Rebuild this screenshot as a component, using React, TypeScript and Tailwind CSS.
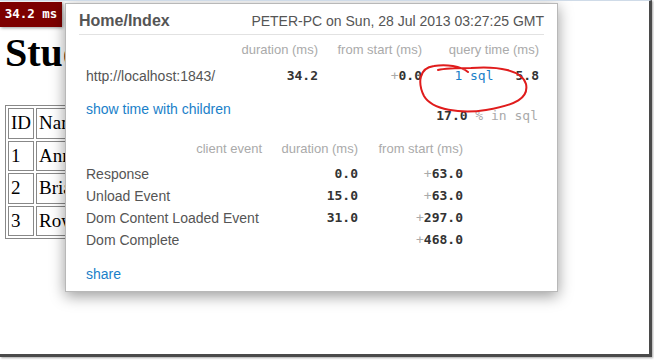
import React from 'react'

const sans = { fontFamily: '"Liberation Sans", Arial, sans-serif' }
const mono = { fontFamily: '"DejaVu Sans Mono", "Liberation Mono", monospace' }
const serif = { fontFamily: '"Liberation Serif", "Times New Roman", serif' }

const students = [
  { id: 1, name: 'Anna' },
  { id: 2, name: 'Brian' },
  { id: 3, name: 'Rowan' },
]

const clientEvents = [
  { name: 'Response', duration: '0.0', start: '63.0' },
  { name: 'Unload Event', duration: '15.0', start: '63.0' },
  { name: 'Dom Content Loaded Event', duration: '31.0', start: '297.0' },
  { name: 'Dom Complete', duration: '', start: '468.0' },
]

function Popup() {
  return (
    <div
      className="absolute left-[65px] top-[2px] w-[493px] h-[289px] bg-white border border-[#b8b8b8] shadow-[0_4px_14px_rgba(0,0,0,0.4)] px-[13px] text-[#555]"
      style={sans}
    >
      {/* title */}
      <div className="h-[31px] pt-[4px] flex items-center justify-between border-b border-[#e2e2e2]">
        <span className="text-[16px] font-bold text-[#555]">Home/Index</span>
        <span className="text-[14px] text-[#555]">PETER-PC on Sun, 28 Jul 2013 03:27:25 GMT</span>
      </div>

      {/* server timings */}
      <div className="grid grid-cols-[159px_80px_104px_117px] h-[30px] items-center text-[13px] text-[#aaa] text-right">
        <span />
        <span>duration (ms)</span>
        <span>from start (ms)</span>
        <span>query time (ms)</span>
      </div>
      <div className="grid grid-cols-[159px_80px_104px_117px] h-[22px] items-center text-right">
        <span className="text-left pl-[7px] text-[14px]">http://localhost:1843/</span>
        <span className="text-[13px] font-bold text-[#333]" style={mono}>34.2</span>
        <span className="text-[13px] font-bold text-[#333]" style={mono}>
          <span className="font-normal text-[#aaa]">+</span>0.0
        </span>
        <span className="flex justify-end items-center gap-[22px] text-[13px]" style={mono}>
          <span className="text-[#1a7fc9]">1 sql</span>
          <span className="font-bold text-[#333]">5.8</span>
        </span>
      </div>
      <div className="h-[40px] flex items-start justify-between pr-[6px] leading-[16px]">
        <span className="mt-[14px] pl-[7px] text-[14px] text-[#1a7fc9]">show time with children</span>
        <span className="mt-[21px] text-[13px]" style={mono}>
          <span className="font-bold text-[#333]">17.0</span>
          <span className="text-[#aaa]"> % in sql</span>
        </span>
      </div>

      {/* client timings */}
      <div className="mt-[11px] grid grid-cols-[183px_96px_105px] h-[22px] items-center text-[13px] text-[#aaa] text-right">
        <span>client event</span>
        <span>duration (ms)</span>
        <span>from start (ms)</span>
      </div>
      <div className="mt-[3px]">
        {clientEvents.map((e) => (
          <div key={e.name} className="grid grid-cols-[183px_96px_105px] h-[22px] items-center text-right">
            <span className="text-left pl-[7px] text-[14px]">{e.name}</span>
            <span className="text-[13px] font-bold text-[#333]" style={mono}>{e.duration}</span>
            <span className="text-[13px] font-bold text-[#333]" style={mono}>
              <span className="font-normal text-[#aaa]">+</span>{e.start}
            </span>
          </div>
        ))}
      </div>

      <div className="mt-[12px] h-[22px] flex items-center pl-[7px] text-[14px] text-[#1a7fc9]">share</div>

      {/* hand drawn annotation */}
      <svg className="absolute left-0 top-0 pointer-events-none" width="493" height="289" viewBox="0 0 493 289" fill="none">
        <path
          d="M402 68 C 395 62, 380 60, 368 62 C 352 64, 352 80, 358 92 C 366 106, 395 110, 420 106 C 450 101, 463 94, 460 80 C 456 66, 432 62, 405 64 C 395 64, 380 64, 372 66"
          stroke="#e01c1c"
          strokeWidth="2"
          strokeLinecap="round"
        />
      </svg>
    </div>
  )
}

export default function App() {
  return (
    <div className="w-[654px] h-[361px] bg-white">
      <div className="relative w-[652px] h-[357px] overflow-hidden bg-white border-t border-[#cfdbe8] border-r-[3px] border-b-[3px] border-r-[#4a4a4a] border-b-[#4a4a4a] shadow-[1px_1px_2px_rgba(0,0,0,0.35)]">
        {/* page behind the profiler popup */}
        <div className="w-[65px] overflow-hidden">
          <div className="mt-[1px] w-[62px] h-[25px] bg-[#7d0000] flex items-center justify-center text-white text-[12.5px] font-bold shadow-[1px_1px_3px_rgba(0,0,0,0.4)]" style={mono}>
            34.2 ms
          </div>
          <h1 className="mt-[3px] ml-[5px] text-[40px] leading-[46px] font-bold text-black whitespace-nowrap" style={serif}>
            Students
          </h1>
          <table
            className="mt-[29px] ml-[5px] border-separate border-spacing-[2px] border border-[#888] text-[19px] text-black"
            style={serif}
          >
            <tbody>
              <tr>
                <td className="border border-[#888] h-[27px] px-[2px]">ID</td>
                <td className="border border-[#888] h-[27px] px-[2px]">Name</td>
              </tr>
              {students.map((s) => (
                <tr key={s.id}>
                  <td className="border border-[#888] h-[27px] px-[2px]">{s.id}</td>
                  <td className="border border-[#888] h-[27px] px-[2px]">{s.name}</td>
                </tr>
              ))}
            </tbody>
          </table>
        </div>
        <Popup />
      </div>
    </div>
  )
}
